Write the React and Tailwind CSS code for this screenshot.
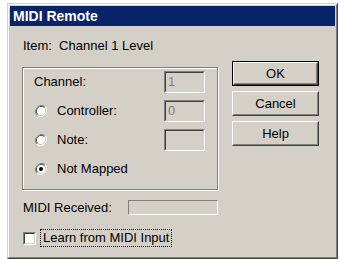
const font = { fontFamily: '"Liberation Sans", Arial, sans-serif' };

function Radio({ checked }) {
  return (
    <svg width="12" height="12" viewBox="0 0 12 12" className="shrink-0">
      <path d="M10.2 1.8 A6 6 0 0 0 1.8 10.2" fill="none" stroke="#808080" strokeWidth="1" />
      <path d="M1.8 10.2 A6 6 0 0 0 10.2 1.8" fill="none" stroke="#ffffff" strokeWidth="1" />
      <path d="M9.5 2.5 A5 5 0 0 0 2.5 9.5" fill="none" stroke="#404040" strokeWidth="1" />
      <path d="M2.5 9.5 A5 5 0 0 0 9.5 2.5" fill="none" stroke="#d4d0c8" strokeWidth="1" />
      <circle cx="6" cy="6" r="4" fill="#ffffff" />
      {checked && <circle cx="6" cy="6" r="2" fill="#000000" />}
    </svg>
  );
}

function Sunken({ className, children }) {
  return (
    <div className={"border border-t-[#808080] border-l-[#808080] border-r-white border-b-white " + className}>
      <div className="h-full w-full border border-t-[#404040] border-l-[#404040] border-r-[#d4d0c8] border-b-[#d4d0c8] bg-[#d4d0c8] pl-[2px] text-[#808080] leading-[17px]">
        {children}
      </div>
    </div>
  );
}

function Button({ label, isDefault }) {
  return (
    <div className={"w-[87px] h-[25px] " + (isDefault ? "border border-black" : "")}>
      <div className="h-full w-full border border-t-white border-l-white border-r-[#404040] border-b-[#404040]">
        <div className="h-full w-full flex items-center justify-center border border-t-[#d4d0c8] border-l-[#d4d0c8] border-r-[#808080] border-b-[#808080] text-black">
          {label}
        </div>
      </div>
    </div>
  );
}

export default function App() {
  return (
    <div className="w-[340px] h-[259px] bg-white pl-[7px] pt-[3px] text-[13px] text-black" style={font}>
      <div className="w-[331px] h-[256px] border border-t-[#d4d0c8] border-l-[#d4d0c8] border-r-[#404040] border-b-[#404040]">
        <div className="h-full w-full border border-t-white border-l-white border-r-[#808080] border-b-[#808080] bg-[#d4d0c8] p-[1px] flex flex-col">
          <div className="h-[20px] bg-[#0a246a] text-white font-bold flex items-center pl-[3px] text-[14px]">
            MIDI Remote
          </div>

          <div className="pl-[13px] mt-[12px] leading-[16px]">Item:&nbsp; Channel 1 Level</div>

          <div className="flex mt-[7px]">
            <div className="ml-[12px] mt-[6px] w-[196px] h-[123px] border border-[#808080] shadow-[inset_1px_1px_0_#fff,1px_1px_0_#fff] pt-[3px] pr-[12px] flex flex-col gap-[7px]">
              <div className="h-[22px] flex items-center justify-between pl-[11px]">
                <span>Channel:</span>
                <Sunken className="w-[41px] h-[22px]">1</Sunken>
              </div>
              <div className="h-[22px] flex items-center justify-between pl-[12px]">
                <div className="flex items-center gap-[10px]">
                  <Radio />
                  <span>Controller:</span>
                </div>
                <Sunken className="w-[41px] h-[22px]">0</Sunken>
              </div>
              <div className="h-[22px] flex items-center justify-between pl-[12px]">
                <div className="flex items-center gap-[10px]">
                  <Radio />
                  <span>Note:</span>
                </div>
                <Sunken className="w-[41px] h-[22px]"></Sunken>
              </div>
              <div className="h-[22px] flex items-center pl-[12px]">
                <div className="flex items-center gap-[10px]">
                  <Radio checked />
                  <span>Not Mapped</span>
                </div>
              </div>
            </div>

            <div className="ml-[14px] flex flex-col gap-[5px]">
              <Button label="OK" isDefault />
              <Button label="Cancel" />
              <Button label="Help" />
            </div>
          </div>

          <div className="flex items-center mt-[10px] pl-[13px] h-[15px]">
            <span className="w-[105px]">MIDI Received:</span>
            <div className="w-[90px] h-[15px] border border-t-[#808080] border-l-[#808080] border-r-white border-b-white"></div>
          </div>

          <div className="flex items-center mt-[14px] pl-[13px] h-[18px]">
            <div className="w-[13px] h-[13px] border border-t-[#808080] border-l-[#808080] border-r-white border-b-white">
              <div className="h-full w-full border border-t-[#404040] border-l-[#404040] border-r-[#d4d0c8] border-b-[#d4d0c8] bg-white"></div>
            </div>
            <span className="ml-[4px] border border-dotted border-black px-[2px] leading-[16px]">Learn from MIDI Input</span>
          </div>
        </div>
      </div>
    </div>
  );
}
